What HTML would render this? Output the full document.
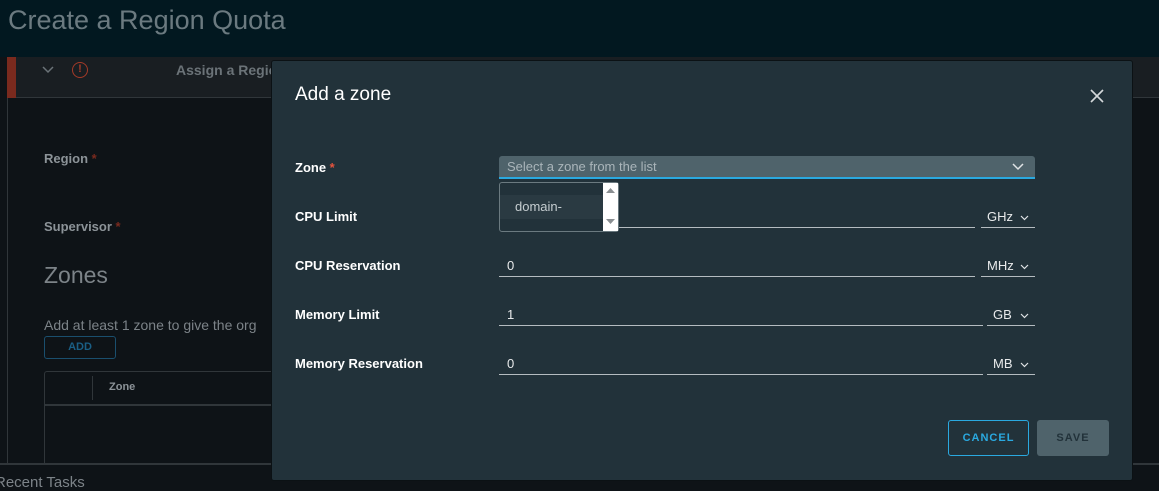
<!DOCTYPE html>
<html><head><style>
*{box-sizing:border-box;margin:0;padding:0}
body{width:1159px;height:482px;overflow:hidden;background:#0e1317;font-family:"Liberation Sans",sans-serif;position:relative}
.abs{position:absolute}
.lbl{position:absolute;left:295px;font-size:13px;font-weight:bold;color:#fff}
.bl{position:absolute;font-size:13px;font-weight:bold;color:#8c9398}
.inp{position:absolute;left:499px;height:21px;border-bottom:1px solid #b5bcc0;color:#e8eaeb;font-size:13px;padding:2px 0 0 8px}
.unit{position:absolute;height:21px;border-bottom:1px solid #b5bcc0;color:#e8eaeb;font-size:13px;padding:2px 0 0 6px}
.unit svg{position:absolute;right:6px;top:8px}
</style></head><body>
<div class="abs" style="left:0;top:0;width:1159px;height:57px;background:#021820"></div>
<div class="abs" style="left:8px;top:5px;font-size:27px;color:#6b7a80">Create a Region Quota</div>
<div class="abs" style="left:7px;top:57px;width:1152px;height:41px;background:#191e22;border-bottom:1px solid #30363a"></div>
<div class="abs" style="left:7px;top:57px;width:9px;height:41px;background:#7a2a1e"></div>
<div class="abs" style="left:7px;top:98px;width:1px;height:366px;background:#30363a"></div>
<svg class="abs" style="left:42px;top:65px" width="12" height="10"><path d="M1 2 L6 7 L11 2" stroke="#6b7378" stroke-width="1.5" fill="none"/></svg>
<div class="abs" style="left:72px;top:62px;width:16px;height:16px;border:1.5px solid #a43a28;border-radius:50%;color:#a43a28;font-size:11px;text-align:center;line-height:13px;font-weight:bold">!</div>
<div class="abs" style="left:176px;top:62px;font-size:14px;font-weight:bold;color:#6b7378">Assign a Region</div>
<div class="bl" style="left:44px;top:151px">Region <span style="color:#7a2a1e">*</span></div>
<div class="bl" style="left:44px;top:219px">Supervisor <span style="color:#7a2a1e">*</span></div>
<div class="abs" style="left:44px;top:262px;font-size:23px;color:#7c8388">Zones</div>
<div class="abs" style="left:44px;top:317px;font-size:14px;color:#7c8388">Add at least 1 zone to give the org</div>
<div class="abs" style="left:44px;top:336px;width:72px;height:23px;border:1px solid #1a4f6e;border-radius:3px;color:#1a5f85;font-size:11px;font-weight:bold;text-align:center;line-height:21px">ADD</div>
<div class="abs" style="left:44px;top:371px;width:240px;height:94px;border:1px solid #30363a;border-right:none;border-radius:3px 0 0 0"></div>
<div class="abs" style="left:44px;top:404px;width:240px;height:2px;background:#30363a"></div>
<div class="abs" style="left:92px;top:376px;width:1px;height:24px;background:#30363a"></div>
<div class="bl" style="left:109px;top:381px;font-size:11px">Zone</div>
<div class="abs" style="left:0;top:463px;width:1159px;height:2px;background:#30363a"></div>
<div class="abs" style="left:-5px;top:474px;font-size:15px;color:#7c8388">Recent Tasks</div>

<div class="abs" style="left:271px;top:60px;width:862px;height:421px;background:#22323a;border:1px solid #0b1114;border-radius:3px"></div>
<div class="abs" style="left:295px;top:84px;font-size:19px;color:#fff">Add a zone</div>
<svg class="abs" style="left:1090px;top:89px" width="14" height="14"><path d="M1 1L13 13M13 1L1 13" stroke="#d5d9db" stroke-width="1.6"/></svg>
<div class="lbl" style="top:160px">Zone <span style="color:#e5533d">*</span></div>
<div class="lbl" style="top:209px">CPU Limit</div>
<div class="lbl" style="top:258px">CPU Reservation</div>
<div class="lbl" style="top:307px">Memory Limit</div>
<div class="lbl" style="top:356px">Memory Reservation</div>
<div class="abs" style="left:499px;top:156px;width:536px;height:23px;background:#4f636b;border-radius:3px 3px 0 0;border-bottom:2px solid #2aa9e0;color:#aab5ba;font-size:13px;padding:3px 0 0 8px">Select a zone from the list</div>
<svg class="abs" style="left:1012px;top:163px" width="12" height="8"><path d="M1 1L6 6L11 1" stroke="#e0e4e6" stroke-width="1.5" fill="none"/></svg>
<div class="inp" style="top:207px;width:476px"></div>
<div class="unit" style="left:981px;top:207px;width:54px">GHz<svg width="9" height="6"><path d="M1 1L4.5 4.5L8 1" stroke="#e0e4e6" stroke-width="1.2" fill="none"/></svg></div>
<div class="inp" style="top:256px;width:476px">0</div>
<div class="unit" style="left:981px;top:256px;width:54px">MHz<svg width="9" height="6"><path d="M1 1L4.5 4.5L8 1" stroke="#e0e4e6" stroke-width="1.2" fill="none"/></svg></div>
<div class="inp" style="top:305px;width:484px">1</div>
<div class="unit" style="left:987px;top:305px;width:48px">GB<svg width="9" height="6"><path d="M1 1L4.5 4.5L8 1" stroke="#e0e4e6" stroke-width="1.2" fill="none"/></svg></div>
<div class="inp" style="top:354px;width:484px">0</div>
<div class="unit" style="left:987px;top:354px;width:48px">MB<svg width="9" height="6"><path d="M1 1L4.5 4.5L8 1" stroke="#e0e4e6" stroke-width="1.2" fill="none"/></svg></div>
<div class="abs" style="left:499px;top:182px;width:120px;height:50px;background:#22323a;border:1px solid #6b7a80;border-radius:3px"></div>
<div class="abs" style="left:500px;top:195px;width:103px;height:24px;background:#2a3a42"></div>
<div class="abs" style="left:515px;top:199px;font-size:13px;color:#c5cdd0">domain-</div>
<div class="abs" style="left:603px;top:183px;width:15px;height:48px;background:#fff"></div>
<svg class="abs" style="left:605px;top:187px" width="11" height="40"><path d="M1 6L5.5 1L10 6Z M1 32L5.5 37L10 32Z" fill="#8a8f92"/></svg>
<div class="abs" style="left:948px;top:420px;width:81px;height:36px;border:1px solid #2aa9e0;border-radius:3px;color:#2aa9e0;font-size:11px;font-weight:bold;letter-spacing:1px;text-align:center;line-height:34px">CANCEL</div>
<div class="abs" style="left:1037px;top:420px;width:72px;height:36px;background:#4f636b;border-radius:3px;color:#22323a;font-size:11px;font-weight:bold;letter-spacing:1px;text-align:center;line-height:36px">SAVE</div>
</body></html>
